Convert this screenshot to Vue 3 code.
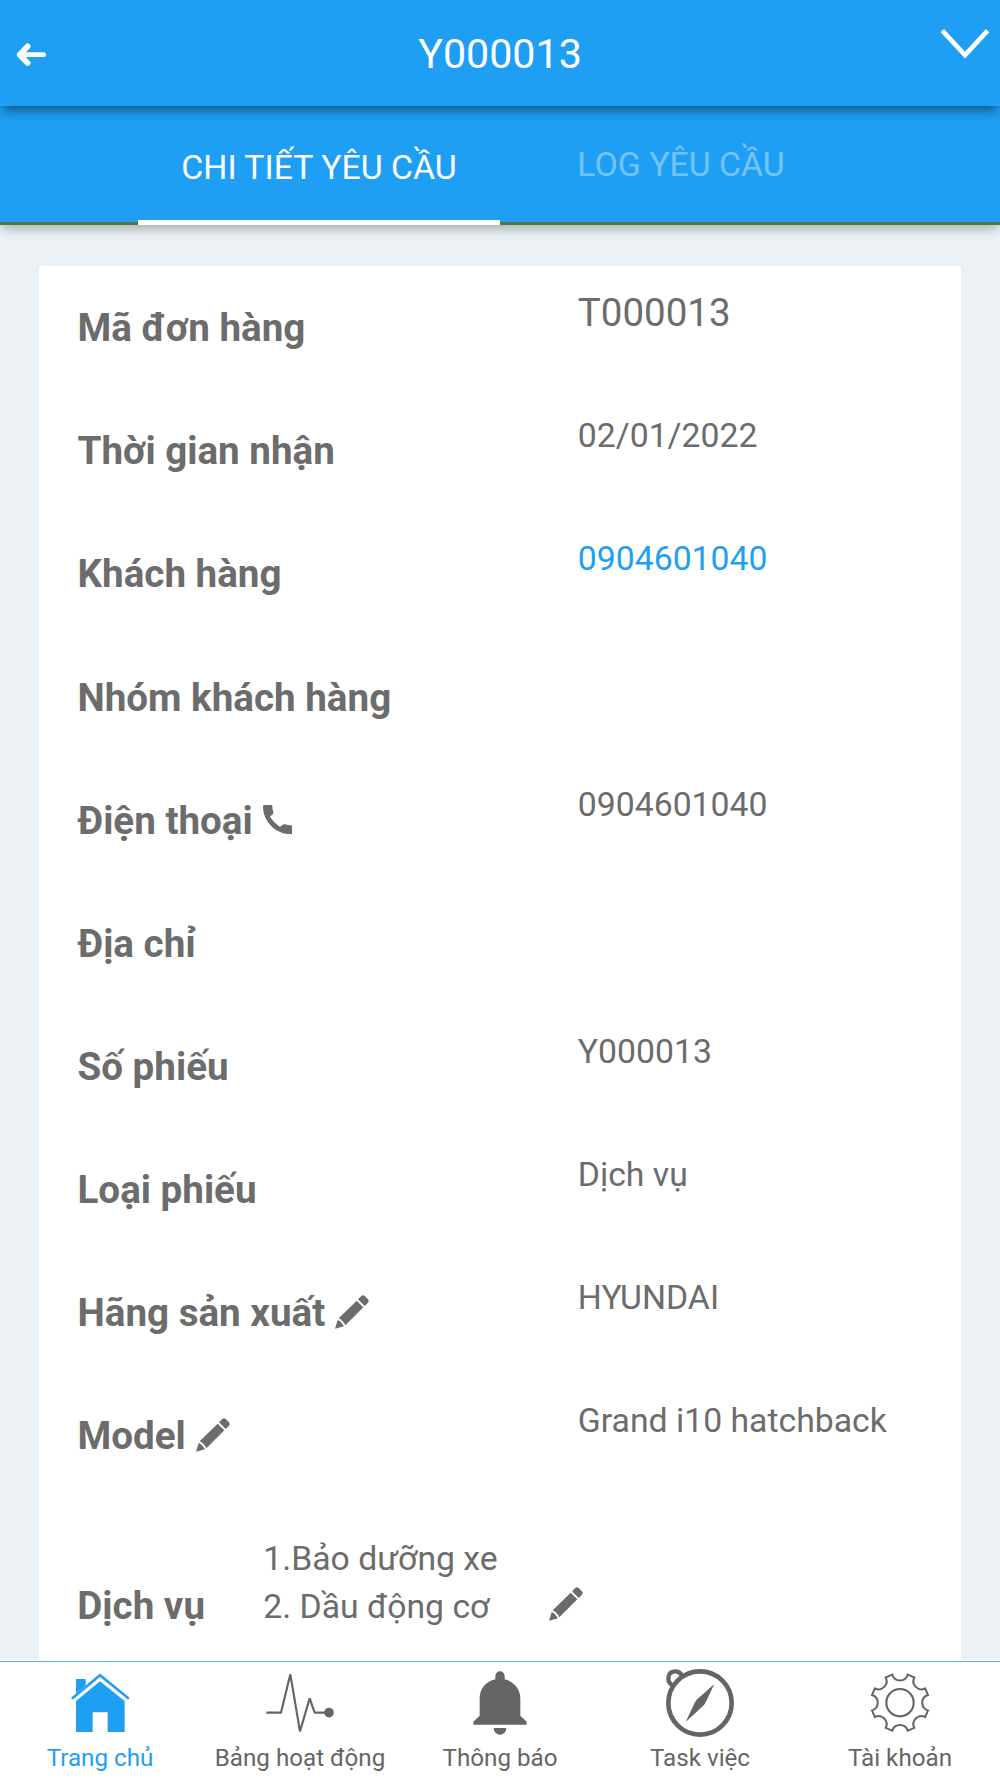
<template>
  <div class="page">
    <header class="header">
      <svg class="back" viewBox="45 123 96 82">
        <path d="M62 164H131" stroke-width="14" />
        <path d="M83 139L59 164L83 189" stroke-width="17" />
      </svg>
      <h1 class="title">Y000013</h1>
      <svg class="chevron" viewBox="1320 80 150 100">
        <path d="M1327 91L1395 164L1463 91" />
      </svg>
    </header>

    <div class="tabs">
      <button
        v-for="tab in tabs"
        :key="tab"
        class="tab"
        :class="{ active: tab === activeTab }"
        @click="activeTab = tab"
      >
        {{ tab }}
      </button>
    </div>

    <main class="content">
      <section class="card">
        <div v-for="row in rows" :key="row.label" class="row">
          <div class="label">
            <span>{{ row.label }}</span>
            <svg v-if="row.icon === 'phone'" class="phone" viewBox="0 0 88 88">
              <path d="M4 0H24Q28 0 28 4Q28 14 31 21Q32 25 29 28L21 35Q32 53 51 66L59 59Q62 57 66 58Q75 61 84 61Q88 61 88 65V84Q88 88 84 88C38 88 0 50 0 4Q0 0 4 0Z" />
            </svg>
            <svg v-if="row.icon === 'edit'" class="pencil" viewBox="0 0 102 102">
              <path :d="pencilPath" />
            </svg>
          </div>
          <div class="value" :class="{ large: row.large, link: row.link }">{{ row.value }}</div>
        </div>

        <div class="service">
          <div class="service-label">Dịch vụ</div>
          <div class="service-list">
            <div v-for="item in services" :key="item">{{ item }}</div>
          </div>
          <svg class="pencil" viewBox="0 0 102 102">
            <path :d="pencilPath" />
          </svg>
        </div>
      </section>
    </main>

    <nav class="bottom-nav">
      <a class="nav-item active">
        <svg class="nav-icon" viewBox="180 42 240 222">
          <path d="M228 87H257V106L228 131Z" />
          <path d="M300 94L374 153V246H323V187H278V246H228V153Z" />
          <path class="line" d="M218 144L300 76L384 144" stroke-width="8" stroke-linecap="round" />
        </svg>
        <span>Trang chủ</span>
      </a>
      <a class="nav-item">
        <svg class="nav-icon" viewBox="30 42 240 222">
          <path class="line" d="M49 188H93L121 73L150 244L179 145L194 188H232" stroke-width="6.5" stroke-linejoin="bevel" />
          <circle cx="237" cy="188" r="14.5" />
        </svg>
        <span>Bảng hoạt động</span>
      </a>
      <a class="nav-item">
        <svg class="nav-icon" viewBox="180 42 240 222">
          <path d="M286 88V79A14 15 0 0 1 314 79V88C342 95 361 116 361 145V197L380 215V224H220V215L239 197V145C239 116 258 95 286 88Z" />
          <path d="M281 234H319A19 20 0 0 1 281 234Z" />
        </svg>
        <span>Thông báo</span>
      </a>
      <a class="nav-item">
        <svg class="nav-icon" viewBox="180 42 240 222">
          <circle class="line" cx="300" cy="159" r="95" stroke-width="14" />
          <path class="line" d="M216 105C199 94 202 64 226 64Q239 64 246 76" stroke-width="13" />
          <path d="M343 102L318 155Q315 162 309 168L257 216L282 163Q285 155 290 149Z" />
        </svg>
        <span>Task việc</span>
      </a>
      <a class="nav-item">
        <svg class="nav-icon" viewBox="180 42 240 222">
          <path class="line" :d="gearPath" stroke-width="6" />
          <circle class="line" cx="300" cy="158" r="41" stroke-width="6.5" />
        </svg>
        <span>Tài khoản</span>
      </a>
    </nav>
  </div>
</template>

<script setup>
import { ref } from 'vue'

const tabs = ['CHI TIẾT YÊU CẦU', 'LOG YÊU CẦU']
const activeTab = ref(tabs[0])

const rows = [
  { label: 'Mã đơn hàng', value: 'T000013', large: true },
  { label: 'Thời gian nhận', value: '02/01/2022' },
  { label: 'Khách hàng', value: '0904601040', link: true },
  { label: 'Nhóm khách hàng', value: '' },
  { label: 'Điện thoại', value: '0904601040', icon: 'phone' },
  { label: 'Địa chỉ', value: '' },
  { label: 'Số phiếu', value: 'Y000013' },
  { label: 'Loại phiếu', value: 'Dịch vụ' },
  { label: 'Hãng sản xuất', value: 'HYUNDAI', icon: 'edit' },
  { label: 'Model', value: 'Grand i10 hatchback', icon: 'edit' }
]

const services = ['1.Bảo dưỡng xe', '2. Dầu động cơ']

const pencilPath =
  'M0 101L8 75Q17 78 27 94Z M11 70L65 17L85 37L31 91Q25 77 11 70Z M69 13L79 3Q84 -2 89 3L99 13Q104 18 99 23L89 33Z'

// Eight scallops joined by short straight teeth
const gearPoint = (deg) => {
  const a = (deg * Math.PI) / 180
  return `${(300 + 87 * Math.sin(a)).toFixed(1)} ${(158 - 87 * Math.cos(a)).toFixed(1)}`
}
let gearPath = `M${gearPoint(-15.3)}`
for (let deg = 0; deg < 360; deg += 45) {
  gearPath += `A24 24 0 0 0 ${gearPoint(deg + 15.3)}L${gearPoint(deg + 29.7)}`
}
gearPath += 'Z'
</script>

<style>
body {
  margin: 0;
}
</style>

<style scoped>
.page {
  display: flex;
  flex-direction: column;
  height: 1778px;
  overflow: hidden;
  background: #ebf1f4;
  color: #6c6c6c;
  font-family: Roboto, sans-serif;
}

.header {
  display: flex;
  flex: none;
  justify-content: space-between;
  height: 106px;
  background: #1f9ff3;
  color: #fff;
  position: relative;
  z-index: 2;
  box-shadow: 0 7px 10px -3px rgba(0, 0, 0, 0.4), 0 3px 14px rgba(0, 0, 0, 0.12);
}

.back {
  width: 32px;
  height: 27.33px;
  margin: 41px 18px 0 15px;
  fill: none;
  stroke: #fff;
  stroke-linecap: round;
  stroke-linejoin: round;
}

.title {
  margin: 0;
  font-size: 41.2px;
  font-weight: 400;
  line-height: 109px;
}

.chevron {
  width: 50px;
  height: 33.33px;
  margin: 26.67px 10px 0 5px;
  fill: none;
  stroke: #fff;
  stroke-width: 14;
}

.tabs {
  display: flex;
  flex: none;
  justify-content: center;
  box-sizing: border-box;
  height: 119px;
  border-bottom: 3px solid #4b7c41;
  background: #1f9ff3;
  position: relative;
  z-index: 1;
  box-shadow: 0 6px 10px -3px rgba(0, 0, 0, 0.22), 0 4px 14px rgba(0, 0, 0, 0.1);
}

.tab {
  box-sizing: border-box;
  width: 362px;
  height: 119px;
  padding: 0 0 1px;
  border: 0;
  background: none;
  color: rgba(255, 255, 255, 0.4);
  font-family: inherit;
  font-size: 33.8px;
  line-height: 116px;
  white-space: nowrap;
}

.tab.active {
  padding: 4px 0 0;
  border-bottom: 5px solid #fff;
  color: #fff;
}

.content {
  flex: 1;
  min-height: 0;
  padding: 41px 39px 0;
  overflow: hidden;
}

.card {
  height: 1500px;
  border-radius: 4px;
  background: #fff;
}

.row {
  display: flex;
  height: 123.15px;
}

.label {
  display: flex;
  flex: 0 0 500px;
  align-items: flex-start;
  box-sizing: border-box;
  padding: 37.1px 0 0 38.5px;
  font-size: 38.6px;
  font-weight: 700;
  line-height: 50px;
}

.value {
  padding: 22.9px 0 0 38.8px;
  font-size: 33.75px;
  line-height: 48.3px;
  white-space: nowrap;
}

.value.large {
  padding-top: 21.8px;
  font-size: 38.5px;
  line-height: 50px;
}

.link {
  color: #1f9ff3;
}

.phone {
  width: 29.3px;
  height: 29.3px;
  margin: 9px 0 0 10px;
  fill: currentColor;
}

.pencil {
  flex: none;
  width: 34px;
  height: 34px;
  margin: 6.8px 0 0 10px;
  overflow: visible;
  fill: currentColor;
}

.service {
  display: flex;
  padding-left: 38.3px;
}

.service-label {
  width: 186px;
  padding-top: 83.5px;
  font-size: 38.6px;
  font-weight: 700;
  line-height: 50px;
}

.service-list {
  width: 285.4px;
  padding-top: 37.5px;
  font-size: 33.75px;
  line-height: 48.3px;
  white-space: nowrap;
}

.service .pencil {
  margin: 89.3px 0 0;
}

.bottom-nav {
  display: flex;
  flex: none;
  box-sizing: border-box;
  height: 118px;
  padding-top: 1px;
  background: #fff;
}

.nav-item {
  display: flex;
  flex: 1;
  flex-direction: column;
  align-items: center;
  border-top: 1px solid #4fb0e8;
  color: #656565;
  font-size: 24.2px;
  line-height: 30px;
  white-space: nowrap;
}

.nav-item.active {
  color: #1f9ff3;
}

.nav-icon {
  width: 80px;
  height: 74px;
  margin: 2px 0 5.3px;
  fill: currentColor;
}

.line {
  fill: none;
  stroke: currentColor;
}
</style>
